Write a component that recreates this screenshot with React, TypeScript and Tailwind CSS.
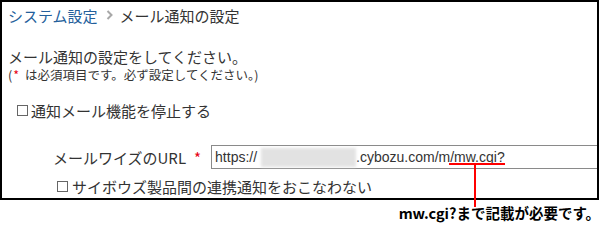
import React from "react";

const jp = { fontFamily: '"Noto Sans CJK JP", "Noto Sans", sans-serif' };

function Box() {
  return <span className="inline-block w-[11px] h-[11px] border border-[#666] bg-white shrink-0" />;
}

export default function App() {
  return (
    <div className="relative w-[600px] h-[224px] bg-white text-[#333] overflow-hidden" style={jp}>
      <div className="w-[599px] h-[200px] border-2 border-black flex flex-col">
        <div className="h-[26px] flex items-center pl-[6px] text-[15px] leading-none">
          <span className="text-[#24609b]">システム設定</span>
          <svg width="7" height="10" viewBox="0 0 7 10" className="ml-[8px] mr-[7px]">
            <path d="M1.5 1 L5.5 5 L1.5 9" fill="none" stroke="#a8a8a8" strokeWidth="2" />
          </svg>
          <span>メール通知の設定</span>
        </div>
        <div className="mt-[19px] h-[18px] flex items-center pl-[6px] text-[15px] leading-none">
          メール通知の設定をしてください。
        </div>
        <div className="mt-[2px] h-[16px] flex items-center pl-[6px] text-[12.5px] leading-none">
          <span>(</span>
          <span className="text-[#e60012] ml-[1px]">*</span>
          <span className="ml-[6px]">は必須項目です。必ず設定してください。)</span>
        </div>
        <div className="mt-[17px] h-[20px] flex items-center pl-[15px] text-[15px] leading-none">
          <Box />
          <span className="ml-[3px]">通知メール機能を停止する</span>
        </div>
        <div className="mt-[25px] h-[24px] flex items-center">
          <span className="ml-[51px] text-[15px] leading-none">メールワイズのURL</span>
          <span className="ml-[8px] text-[15px] leading-none text-[#e60012]">*</span>
          <div
            className="ml-[10px] flex-1 h-[24px] border border-r-0 border-[#8a8a8a] flex items-center pl-[3px] text-[14px] text-[#333]"
            style={{ fontFamily: '"Liberation Sans", Arial, sans-serif' }}
          >
            <span>https://</span>
            <span className="inline-block w-[95px] h-[19px] ml-[4px] bg-[#e2e2e2] blur-[1.5px]" />
            <span>.cybozu.com/m/mw.cgi?</span>
          </div>
        </div>
        <div className="mt-[7px] h-[20px] flex items-center pl-[55px] text-[15px] leading-none">
          <Box />
          <span className="ml-[4px]">サイボウズ製品間の連携通知をおこなわない</span>
        </div>
      </div>
      <div className="h-[24px] pt-[3px] flex items-center justify-end text-[14.5px] font-bold text-black leading-none whitespace-nowrap">
        <span>mw.cgi?まで記載が必要です。</span>
      </div>
      <div className="absolute left-[449px] top-[163px] w-[56px] h-[2px] bg-[#ff0000]" />
      <div className="absolute left-[474px] top-[163px] w-[2px] h-[44px] bg-[#ff0000]" />
    </div>
  );
}
